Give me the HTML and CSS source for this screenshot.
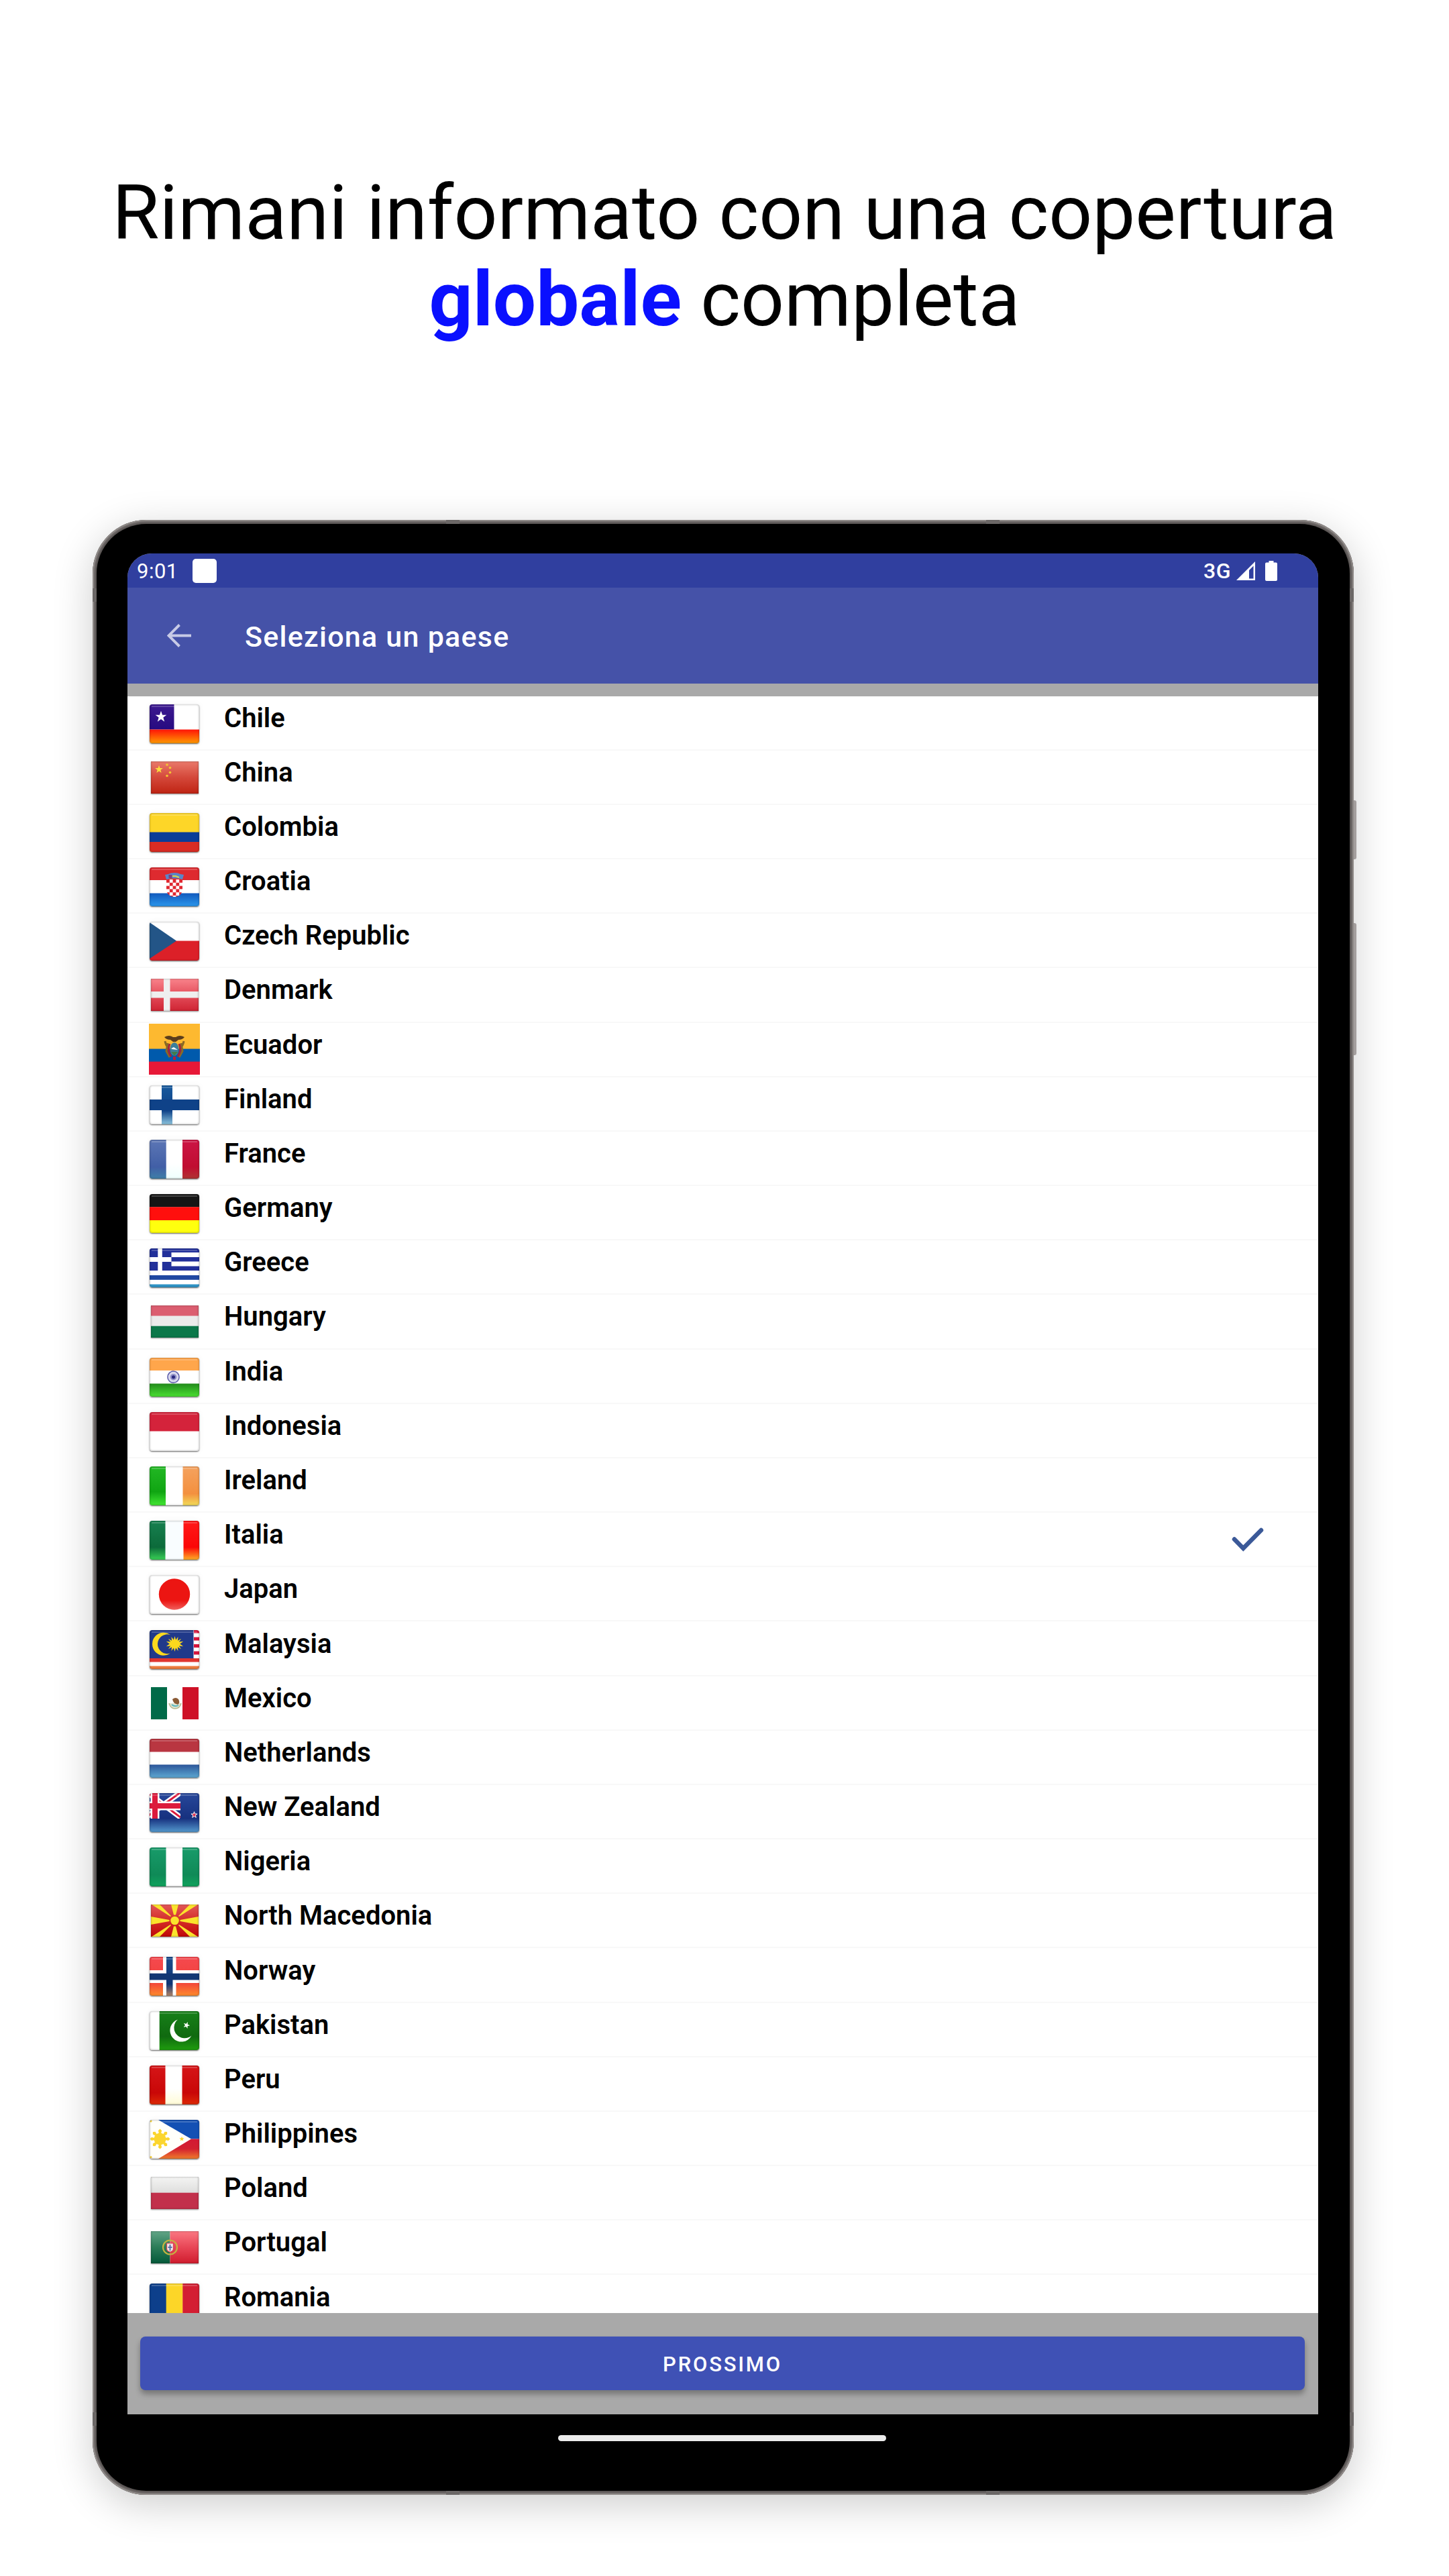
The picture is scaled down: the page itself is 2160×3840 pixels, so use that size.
FILE: index.html
```html
<!DOCTYPE html>
<html lang="it">
<head>
    <meta charset="UTF-8">
    <meta name="viewport" content="width=device-width, initial-scale=1.0">
    <title>Seleziona un paese</title>
    <link rel="stylesheet" href="styles.css">
</head>
<body>
    <!-- shared gradients and shapes for the flags -->
    <svg class="defs" width="0" height="0">
        <defs>
            <linearGradient id="g-chile" x2="0" y2="1"><stop offset="0" stop-color="#ff1408"/><stop offset="1" stop-color="#ff9a00"/></linearGradient>
            <linearGradient id="g-canton" x2="0" y2="1"><stop offset="0" stop-color="#3d1a90"/><stop offset="1" stop-color="#260a80"/></linearGradient>
            <linearGradient id="g-china" x2="0" y2="1"><stop offset="0" stop-color="#ea7a6b"/><stop offset=".5" stop-color="#d4483a"/><stop offset="1" stop-color="#bf2413"/></linearGradient>
            <linearGradient id="g-croatia" x2="0" y2="1"><stop offset="0" stop-color="#1059bd"/><stop offset="1" stop-color="#2c97ec"/></linearGradient>
            <linearGradient id="g-denmark" x2="0" y2="1"><stop offset="0" stop-color="#f9838b"/><stop offset=".5" stop-color="#e44f5c"/><stop offset="1" stop-color="#cf2433"/></linearGradient>
            <linearGradient id="g-finland" x2="0" y2="1"><stop offset="0" stop-color="#185a9d"/><stop offset=".65" stop-color="#0f4288"/><stop offset="1" stop-color="#8cc4de"/></linearGradient>
            <linearGradient id="g-france1" x2="0" y2="1"><stop offset="0" stop-color="#5c76b5"/><stop offset=".7" stop-color="#415fa6"/><stop offset="1" stop-color="#3f7fa8"/></linearGradient>
            <linearGradient id="g-france2" x2="0" y2="1"><stop offset="0" stop-color="#cc1545"/><stop offset=".7" stop-color="#c00d31"/><stop offset="1" stop-color="#b03434"/></linearGradient>
            <linearGradient id="g-mint" x2="0" y2="1"><stop offset=".6" stop-color="#fff"/><stop offset="1" stop-color="#f0fffe"/></linearGradient>
            <linearGradient id="g-india" x2="0" y2="1"><stop offset="0" stop-color="#228a1b"/><stop offset="1" stop-color="#4ae032"/></linearGradient>
            <linearGradient id="g-ireland1" x2="0" y2="1"><stop offset="0" stop-color="#22b824"/><stop offset=".65" stop-color="#10a512"/><stop offset="1" stop-color="#42e633"/></linearGradient>
            <linearGradient id="g-ireland2" x2="0" y2="1"><stop offset="0" stop-color="#f5a25e"/><stop offset=".7" stop-color="#f3903f"/><stop offset="1" stop-color="#f3dc59"/></linearGradient>
            <linearGradient id="g-italy1" x2="0" y2="1"><stop offset="0" stop-color="#178050"/><stop offset=".68" stop-color="#0c6a3a"/><stop offset="1" stop-color="#38d055"/></linearGradient>
            <linearGradient id="g-italy2" x2="0" y2="1"><stop offset="0" stop-color="#ff1818"/><stop offset=".68" stop-color="#fb0707"/><stop offset="1" stop-color="#ffae24"/></linearGradient>
            <linearGradient id="g-japan" x2="0" y2="1"><stop offset=".7" stop-color="#ec1512"/><stop offset="1" stop-color="#f0605c"/></linearGradient>
            <linearGradient id="g-dutch" x2="0" y2="1"><stop offset="0" stop-color="#2c5699"/><stop offset="1" stop-color="#5ea8d2"/></linearGradient>
            <linearGradient id="g-nz" x2="0" y2="1"><stop offset="0" stop-color="#27479a"/><stop offset=".65" stop-color="#17317f"/><stop offset="1" stop-color="#5398cd"/></linearGradient>
            <linearGradient id="g-nigeria" x2="0" y2="1"><stop offset="0" stop-color="#189b6a"/><stop offset=".7" stop-color="#0f8a57"/><stop offset="1" stop-color="#10a25c"/></linearGradient>
            <linearGradient id="g-mk" x2="0" y2="1"><stop offset="0" stop-color="#e25858"/><stop offset=".5" stop-color="#d42c28"/><stop offset="1" stop-color="#c00808"/></linearGradient>
            <linearGradient id="g-norway" x2="0" y2="1"><stop offset="0" stop-color="#f5494f"/><stop offset=".65" stop-color="#f2413b"/><stop offset="1" stop-color="#fd8a2c"/></linearGradient>
            <linearGradient id="g-norway2" x2="0" y2="1"><stop offset="0" stop-color="#1b4c8c"/><stop offset=".7" stop-color="#0f3474"/><stop offset="1" stop-color="#b08468"/></linearGradient>
            <linearGradient id="g-pak" x2="0" y2="1"><stop offset="0" stop-color="#178019"/><stop offset=".65" stop-color="#106a10"/><stop offset="1" stop-color="#1f9d0e"/></linearGradient>
            <linearGradient id="g-peru" x2="0" y2="1"><stop offset="0" stop-color="#d61518"/><stop offset=".7" stop-color="#c90707"/><stop offset="1" stop-color="#dd2a06"/></linearGradient>
            <linearGradient id="g-cream" x2="0" y2="1"><stop offset=".6" stop-color="#fff"/><stop offset="1" stop-color="#fffbd6"/></linearGradient>
            <linearGradient id="g-phil" x2="0" y2="1"><stop offset="0" stop-color="#d21934"/><stop offset=".5" stop-color="#d3202f"/><stop offset="1" stop-color="#f07c2c"/></linearGradient>
            <linearGradient id="g-poland" x2="0" y2="1"><stop offset="0" stop-color="#f4f4f3"/><stop offset="1" stop-color="#dededd"/></linearGradient>
            <linearGradient id="g-port1" x2="0" y2="1"><stop offset="0" stop-color="#62a587"/><stop offset=".5" stop-color="#2b7c58"/><stop offset="1" stop-color="#04593a"/></linearGradient>
            <linearGradient id="g-port2" x2="0" y2="1"><stop offset="0" stop-color="#fa7882"/><stop offset=".5" stop-color="#e84656"/><stop offset="1" stop-color="#d01c2e"/></linearGradient>
            <pattern id="checks" x="25" y="18" width="9.6" height="9.6" patternUnits="userSpaceOnUse">
                <rect width="9.6" height="9.6" fill="#fff"/>
                <path d="M0 0h4.8v4.8H0zM4.8 4.8h4.8v4.8H4.8z" fill="#e0262f"/>
            </pattern>
            <path id="star" d="M0-10 2.35-3.24 9.5-3.1 3.8 1.24 5.88 8.1 0 4-5.88 8.1-3.8 1.24-9.5-3.1-2.35-3.24z"/>
            <g id="ray8">
                <path id="ray" d="M-1.5-8-2.6-12.5 0-15 2.6-12.5 1.5-8z"/>
                <use href="#ray" transform="rotate(45)"/>
                <use href="#ray" transform="rotate(90)"/>
                <use href="#ray" transform="rotate(135)"/>
                <use href="#ray" transform="rotate(180)"/>
                <use href="#ray" transform="rotate(225)"/>
                <use href="#ray" transform="rotate(270)"/>
                <use href="#ray" transform="rotate(315)"/>
            </g>
        </defs>
    </svg>

    <h1 class="headline">Rimani informato con una copertura<br><strong>globale</strong> completa</h1>

    <div class="tablet">
        <i class="side-button power"></i>
        <i class="side-button volume"></i>
        <i class="band top left"></i>
        <i class="band top right"></i>
        <i class="band bottom left"></i>
        <i class="band bottom right"></i>
        <i class="band-side upper left"></i>
        <i class="band-side upper right"></i>
        <i class="band-side lower left"></i>
        <i class="band-side lower right"></i>

        <div class="bezel">
            <div class="screen">
                <div class="status-bar">
                    <span class="clock">9:01</span>
                    <span class="notification"></span>
                    <span class="network">3G</span>
                    <svg class="signal" viewBox="0 0 28 28"><path d="M28 0V28H0zM25.5 6.5 19 13V25.5h6.5z" fill="#fff" fill-rule="evenodd"/></svg>
                    <svg class="battery" viewBox="0 0 18 30"><path d="M5.5 0h7v2.5H16a2 2 0 0 1 2 2V28a2 2 0 0 1-2 2H2a2 2 0 0 1-2-2V4.5a2 2 0 0 1 2-2h3.5z" fill="#fff"/></svg>
                </div>

                <div class="app-bar">
                    <svg class="back" viewBox="0 0 36 35"><path d="M36 17.5H3M18.5 1.5 2.5 17.5 18.5 33.5" fill="none" stroke="#c7cae6" stroke-width="4"/></svg>
                    <span class="title">Seleziona un paese</span>
                </div>

                <ul class="countries">
                    <li>
                        <span class="icon"><span class="flag glossy"><svg viewBox="0 0 74 58"><rect width="74" height="58" fill="#fff"/><rect width="36.5" height="37.5" fill="url(#g-canton)"/><rect y="37.5" width="74" height="20.5" fill="url(#g-chile)"/><use href="#star" transform="translate(17 18.5) scale(.88)" fill="#fff"/></svg></span></span>
                        <span class="name">Chile</span>
                    </li>
                    <li>
                        <span class="icon"><span class="flag small"><svg viewBox="0 0 71 48"><rect width="71" height="48" fill="url(#g-china)"/><use href="#star" transform="translate(12 12) scale(.62)" fill="#fbdc3c"/><g fill="#f3c433"><circle cx="24" cy="5" r="1.8"/><circle cx="28.5" cy="9.5" r="1.8"/><circle cx="28.5" cy="16.5" r="1.8"/><circle cx="24" cy="21.5" r="1.8"/></g></svg></span></span>
                        <span class="name">China</span>
                    </li>
                    <li>
                        <span class="icon"><span class="flag glossy"><svg viewBox="0 0 74 58"><rect width="74" height="58" fill="#fdd628"/><rect y="28.5" width="74" height="15" fill="#0a3d97"/><rect y="43" width="74" height="15" fill="#da2c23"/></svg></span></span>
                        <span class="name">Colombia</span>
                    </li>
                    <li>
                        <span class="icon"><span class="flag glossy"><svg viewBox="0 0 74 58"><rect width="74" height="58" fill="#fff"/><rect width="74" height="19" fill="#de2a2f"/><rect y="38.5" width="74" height="19.5" fill="url(#g-croatia)"/><path d="M25 18h24v14c0 7-5 12-12 12s-12-5-12-12z" fill="url(#checks)"/><path d="M23 11l5-1 4-1.500 5-.5 5 .5 4 1.500 5 1-2 7-6-1.500h-12L25 18z" fill="#5b86c8"/><path d="M28.5 11h5v5h-5z" fill="#8a3b78"/><path d="M34 13h5l5 2" stroke="#dcd64a" stroke-width="2" fill="none"/></svg></span></span>
                        <span class="name">Croatia</span>
                    </li>
                    <li>
                        <span class="icon"><span class="flag glossy"><svg viewBox="0 0 74 58"><rect width="74" height="28.5" fill="#fff"/><rect y="28.5" width="74" height="29.5" fill="#dc2028"/><path d="M0 1 40 28.5 0 55z" fill="#235587"/></svg></span></span>
                        <span class="name">Czech Republic</span>
                    </li>
                    <li>
                        <span class="icon"><span class="flag small"><svg viewBox="0 0 71 48"><rect width="71" height="48" fill="url(#g-denmark)"/><path d="M19 0h9.500v19H71v9.500H28.5V48H19V28.5H0V19h19z" fill="#efefef"/></svg></span></span>
                        <span class="name">Denmark</span>
                    </li>
                    <li>
                        <span class="icon"><span class="flag square"><svg viewBox="0 0 76 76"><rect width="76" height="38" fill="#fdb930"/><rect y="37.5" width="76" height="19.5" fill="#005aac"/><rect y="56.5" width="76" height="19.5" fill="#e71837"/><path d="M23 20q7-4 13 0h4q6-4 13 0-3 4-9 4l-4 3h-4l-4-3q-6 0-9-4z" fill="#5b3d1c"/><path d="M24 26q1 6 4 9M52 26q-1 6-4 9M28 29l-2 12 5 9M48 29l2 12-5 9" stroke="#8a6a25" stroke-width="3" fill="none"/><path d="M31 30q-4 10 2 19M45 30q4 10-2 19" stroke="#a3243c" stroke-width="3" fill="none"/><ellipse cx="38" cy="38" rx="6.500" ry="10" fill="#3c7f9a"/><path d="M33 37l4-2 6 4-8-1z" fill="#fff"/><path d="M33 42h10l-5 6z" fill="#3f7d4a"/><path d="M36 49h4v5h-4z" fill="#b0213c"/></svg></span></span>
                        <span class="name">Ecuador</span>
                    </li>
                    <li>
                        <span class="icon"><span class="flag glossy"><svg viewBox="0 0 74 58"><rect width="74" height="58" fill="#fff"/><rect x="18" width="16" height="58" fill="url(#g-finland)"/><rect y="21" width="74" height="16" fill="#0f4288"/></svg></span></span>
                        <span class="name">Finland</span>
                    </li>
                    <li>
                        <span class="icon"><span class="flag glossy"><svg viewBox="0 0 74 58"><rect width="74" height="58" fill="url(#g-mint)"/><rect width="24.7" height="58" fill="url(#g-france1)"/><rect x="49" width="25" height="58" fill="url(#g-france2)"/></svg></span></span>
                        <span class="name">France</span>
                    </li>
                    <li>
                        <span class="icon"><span class="flag glossy"><svg viewBox="0 0 74 58"><rect width="74" height="19.5" fill="#151515"/><rect y="19.3" width="74" height="20" fill="#ff0f0d"/><rect y="39" width="74" height="19" fill="#ffff0e"/></svg></span></span>
                        <span class="name">Germany</span>
                    </li>
                    <li>
                        <span class="icon"><span class="flag glossy"><svg viewBox="0 0 74 58"><rect width="74" height="58" fill="#fff"/><g fill="#22309a"><rect width="74" height="6"/><rect y="13" width="74" height="6.5"/><rect y="26.5" width="74" height="6.5"/><rect width="32.5" height="33"/></g><rect y="40" width="74" height="6.8" fill="#2048a2"/><rect y="53.5" width="74" height="4.5" fill="#2f94c6"/><path d="M12.3 0h6.5v13h13.7v7H18.8v13h-6.5V20H0v-7h12.3z" fill="#fff"/></svg></span></span>
                        <span class="name">Greece</span>
                    </li>
                    <li>
                        <span class="icon"><span class="flag small"><svg viewBox="0 0 71 48"><rect width="71" height="16" fill="#db5e70"/><rect y="15.5" width="71" height="15.5" fill="#ebebeb"/><rect y="30.7" width="71" height="17.5" fill="#0b7749"/></svg></span></span>
                        <span class="name">Hungary</span>
                    </li>
                    <li>
                        <span class="icon"><span class="flag glossy"><svg viewBox="0 0 74 58"><rect width="74" height="58" fill="#fff"/><rect width="74" height="19" fill="#ffa64b"/><rect y="38.5" width="74" height="19.5" fill="url(#g-india)"/><circle cx="35.5" cy="28.7" r="8.6" fill="#d9d9ee" stroke="#5a5aa8" stroke-width="1.5"/><circle cx="35.5" cy="28.7" r="4.8" fill="#8f8fc6"/><circle cx="35.5" cy="28.7" r="2.5" fill="#28287e"/></svg></span></span>
                        <span class="name">India</span>
                    </li>
                    <li>
                        <span class="icon"><span class="flag glossy"><svg viewBox="0 0 74 58"><rect width="74" height="58" fill="#fff"/><rect width="74" height="28.5" fill="#d4233b"/></svg></span></span>
                        <span class="name">Indonesia</span>
                    </li>
                    <li>
                        <span class="icon"><span class="flag glossy"><svg viewBox="0 0 74 58"><rect width="74" height="58" fill="#fff"/><rect width="24" height="58" fill="url(#g-ireland1)"/><rect x="49.5" width="24.5" height="58" fill="url(#g-ireland2)"/></svg></span></span>
                        <span class="name">Ireland</span>
                    </li>
                    <li>
                        <span class="icon"><span class="flag glossy"><svg viewBox="0 0 74 58"><rect width="74" height="58" fill="#f9fdff"/><rect width="23.5" height="58" fill="url(#g-italy1)"/><rect x="50.5" width="23.5" height="58" fill="url(#g-italy2)"/></svg></span></span>
                        <span class="name">Italia</span>
                        <svg class="check" viewBox="0 0 48 36"><path d="M4 17.5 17.3 31 44 4" fill="none" stroke="#3b5998" stroke-width="6.5" stroke-linecap="round"/></svg>
                    </li>
                    <li>
                        <span class="icon"><span class="flag glossy"><svg viewBox="0 0 74 58"><rect width="74" height="58" fill="#fff"/><circle cx="37" cy="28.5" r="23.2" fill="url(#g-japan)"/></svg></span></span>
                        <span class="name">Japan</span>
                    </li>
                    <li>
                        <span class="icon"><span class="flag glossy"><svg viewBox="0 0 74 58"><rect width="74" height="58" fill="#fff"/><path d="M66 2h8M66 13h8M66 23.5h8M66 34h8" stroke="#d8143c" stroke-width="5"/><rect width="65.5" height="42" fill="#20398a"/><rect y="42" width="74" height="5.5" fill="#e0352f"/><rect y="53.5" width="74" height="4.5" fill="#ee7d3e"/><path d="M31 7A17 17 0 1 0 31 34.5 14.5 14.5 0 1 1 31 7z" fill="#fbd91e"/><path d="M37.5 9l1.6 5.5 3.4-4.5-.6 5.7 5.2-3-3.3 4.7 6.4-.6-5 3.7 5 3.7-6.4-.6 3.3 4.7-5.2-3 .6 5.7-3.4-4.5-1.6 5.5-1.6-5.5-3.4 4.5.6-5.7-5.2 3 3.3-4.7-6.4.6 5-3.7-5-3.7 6.4.6-3.3-4.7 5.2 3-.6-5.7 3.4 4.5z" fill="#fbd91e"/></svg></span></span>
                        <span class="name">Malaysia</span>
                    </li>
                    <li>
                        <span class="icon"><span class="flag small plain"><svg viewBox="0 0 71 48"><rect width="71" height="48" fill="#fff"/><rect width="24" height="48" fill="#006a48"/><rect x="47" width="24" height="48" fill="#ce1127"/><path d="M27 24q2 8 9 8t9-8" fill="#dfe3cf" stroke="#b9b88e" stroke-width="1.5"/><path d="M32 18q5-4 9 0 3 5-1 8l-5-2-2-3z" fill="#8a5a35"/><path d="M31 26q5 4 10 1" stroke="#57b5bd" stroke-width="2" fill="none"/></svg></span></span>
                        <span class="name">Mexico</span>
                    </li>
                    <li>
                        <span class="icon"><span class="flag glossy"><svg viewBox="0 0 74 58"><rect width="74" height="58" fill="#fffffd"/><rect width="74" height="19.5" fill="#b93641"/><rect y="38.5" width="74" height="19.5" fill="url(#g-dutch)"/></svg></span></span>
                        <span class="name">Netherlands</span>
                    </li>
                    <li>
                        <span class="icon"><span class="flag glossy"><svg viewBox="0 0 74 58"><rect width="74" height="58" fill="url(#g-nz)"/><svg width="46" height="38" viewBox="0 0 46 38"><path d="M-30-21 46 36M-30 54 46-1" stroke="#fff" stroke-width="8"/><path d="M-30-21 46 36M-30 54 46-1" stroke="#dc1a3c" stroke-width="3"/><path d="M8 0v38M0 19h46" stroke="#fff" stroke-width="13"/><path d="M8 0v38M0 19h46" stroke="#dc1a3c" stroke-width="8"/></svg><use href="#star" transform="translate(66.5 32.5) scale(.48)" fill="#dc2b4a" stroke="#fff" stroke-width="2"/></svg></span></span>
                        <span class="name">New Zealand</span>
                    </li>
                    <li>
                        <span class="icon"><span class="flag glossy"><svg viewBox="0 0 74 58"><rect width="74" height="58" fill="#fff"/><rect width="24.5" height="58" fill="url(#g-nigeria)"/><rect x="49" width="25" height="58" fill="url(#g-nigeria)"/></svg></span></span>
                        <span class="name">Nigeria</span>
                    </li>
                    <li>
                        <span class="icon"><span class="flag small"><svg viewBox="0 0 71 48"><rect width="71" height="48" fill="url(#g-mk)"/><g fill="#fae32c"><path d="M30 0h11l-4 15.5h-3zM30 48h11l-4-15.5h-3zM0 18v12l27.5-5v-2zM71 18v12l-27.5-5v-2zM1 0h12l17 17-1 1zM70 0H58L41 17l1 1zM1 48h12l17-17-1-1zM70 48H58L41 31l1-1z"/><circle cx="35.5" cy="24" r="6.3"/></g></svg></span></span>
                        <span class="name">North Macedonia</span>
                    </li>
                    <li>
                        <span class="icon"><span class="flag glossy"><svg viewBox="0 0 74 58"><rect width="74" height="58" fill="url(#g-norway)"/><path d="M20 0h19.5v20H74v19H39.5v19H20V39H0V20h20z" fill="#fff"/><rect x="25" width="9.5" height="58" fill="url(#g-norway2)"/><rect y="24.7" width="74" height="9.8" fill="#123774"/></svg></span></span>
                        <span class="name">Norway</span>
                    </li>
                    <li>
                        <span class="icon"><span class="flag glossy"><svg viewBox="0 0 74 58"><rect width="74" height="58" fill="#fff"/><rect x="14.7" width="59.3" height="58" fill="url(#g-pak)"/><path d="M42 12.5A17 17 0 1 0 62.5 36.5 15.5 15.5 0 0 1 42 12.5z" fill="#fff"/><use href="#star" transform="translate(55 21) rotate(20) scale(.52)" fill="#fff"/></svg></span></span>
                        <span class="name">Pakistan</span>
                    </li>
                    <li>
                        <span class="icon"><span class="flag glossy"><svg viewBox="0 0 74 58"><rect width="74" height="58" fill="url(#g-cream)"/><rect width="23.5" height="58" fill="url(#g-peru)"/><rect x="48.5" width="25.5" height="58" fill="url(#g-peru)"/></svg></span></span>
                        <span class="name">Peru</span>
                    </li>
                    <li>
                        <span class="icon"><span class="flag glossy"><svg viewBox="0 0 74 58"><rect width="74" height="28.5" fill="#1350b4"/><rect y="28.5" width="74" height="29.5" fill="url(#g-phil)"/><path d="M0 0h13L62 28.5 13 58H0z" fill="#fffffb"/><g fill="#fbd52e"><circle cx="15.5" cy="28.5" r="9"/><use href="#ray8" transform="translate(15.5 28.5)"/><use href="#star" transform="translate(48 28.5) scale(.38)"/><circle cx="2" cy="2" r="1.5"/><circle cx="2" cy="55.5" r="1.5"/></g></svg></span></span>
                        <span class="name">Philippines</span>
                    </li>
                    <li>
                        <span class="icon"><span class="flag small"><svg viewBox="0 0 71 48"><rect width="71" height="24" fill="url(#g-poland)"/><rect y="23.7" width="71" height="24.3" fill="#c2304b"/></svg></span></span>
                        <span class="name">Poland</span>
                    </li>
                    <li>
                        <span class="icon"><span class="flag small"><svg viewBox="0 0 71 48"><rect width="28.5" height="48" fill="url(#g-port1)"/><rect x="28.5" width="42.5" height="48" fill="url(#g-port2)"/><circle cx="28.5" cy="24" r="10.5" fill="none" stroke="#c4b440" stroke-width="2.2"/><path d="M23.5 18h10v8q0 4-5 5-5-1-5-5z" fill="#f3e4e8" stroke="#d8404e" stroke-width="1.2"/><path d="M28.5 20v9M25.5 24h6" stroke="#5873a8" stroke-width="2"/></svg></span></span>
                        <span class="name">Portugal</span>
                    </li>
                    <li>
                        <span class="icon"><span class="flag glossy"><svg viewBox="0 0 74 58"><rect width="25" height="58" fill="#0d3f8b"/><rect x="24.7" width="25" height="58" fill="#fcd628"/><rect x="49.3" width="24.7" height="58" fill="#d31e33"/></svg></span></span>
                        <span class="name">Romania</span>
                    </li>
                </ul>

                <div class="footer">
                    <button class="next">PROSSIMO</button>
                </div>
            </div>
            <div class="home-indicator"></div>
        </div>
    </div>
</body>
</html>
```
FILE: styles.css
```css
* {
    box-sizing: border-box;
}
body {
    font-family: Roboto, sans-serif;
    background: #fff;
    margin: 0;
    width: 2160px;
    height: 3840px;
    padding-top: 253px;
    overflow: hidden;
}
.defs {
    position: absolute;
}
.headline {
    margin: 0;
    height: 258px;
    font-size: 114px;
    line-height: 129px;
    font-weight: 400;
    text-align: center;
    white-space: nowrap;
    color: #000;
}
.headline strong {
    font-weight: 700;
    color: #0a10ff;
}

/* tablet frame */
.tablet {
    position: relative;
    width: 1880px;
    height: 2944px;
    margin: 264px 0 0 138px;
    padding: 6px;
    border-radius: 80px;
    background: #5b5655;
    box-shadow: inset 0 0 0 2px #8f8a88, inset 0 0 0 4px #6c6766, 0 14px 60px rgba(0, 0, 0, 0.2);
}
.bezel {
    height: 100%;
    padding: 44px 46px 0;
    border-radius: 74px;
    background: #000;
    display: flex;
    flex-direction: column;
    align-items: center;
}
.side-button {
    position: absolute;
    left: 100%;
    width: 4px;
    background: #a39e9d;
    border-radius: 0 3px 3px 0;
}
.power {
    top: 418px;
    height: 88px;
}
.volume {
    top: 601px;
    height: 197px;
}
.band,
.band-side {
    position: absolute;
    background: #6b6766;
}
.band {
    width: 20px;
    height: 6px;
}
.band.left {
    left: 527px;
}
.band.right {
    left: 1332px;
}
.band.top {
    top: 0;
}
.band.bottom {
    bottom: 0;
}
.band-side {
    width: 6px;
    height: 20px;
}
.band-side.left {
    left: 0;
}
.band-side.right {
    right: 0;
}
.band-side.upper {
    top: 102px;
}
.band-side.lower {
    top: 2821px;
}

/* screen */
.screen {
    width: 1775px;
    height: 2774px;
    flex: none;
    align-self: flex-start;
    display: flex;
    flex-direction: column;
    overflow: hidden;
    border-radius: 36px 36px 0 0;
    background: #a9a9a9;
}
.status-bar {
    height: 51px;
    flex: none;
    display: flex;
    align-items: center;
    padding: 0 61px 0 14px;
    background: #303f9f;
    color: #fff;
}
.clock {
    font-size: 31px;
    letter-spacing: 0.5px;
    width: 83px;
    padding-top: 1px;
}
.notification {
    width: 36px;
    height: 36px;
    border-radius: 5px;
    background: #fff;
}
.network {
    margin-left: auto;
    font-size: 32px;
    letter-spacing: 0.5px;
    font-weight: 500;
}
.signal {
    width: 28px;
    height: 28px;
    margin: 0 15px 0 8px;
}
.battery {
    width: 18px;
    height: 30px;
}
.app-bar {
    height: 143px;
    flex: none;
    display: flex;
    align-items: center;
    padding-left: 59px;
    background: #4552a8;
    color: #fff;
}
.back {
    width: 36px;
    height: 35px;
    margin-right: 80px;
}
.title {
    font-size: 43px;
    font-weight: 500;
    letter-spacing: 1.25px;
    padding-top: 3px;
}

/* country list */
.countries {
    list-style: none;
    margin: 18.5px 0 0;
    padding: 0;
    height: 2410px;
    flex: none;
    overflow: hidden;
    background: #fff;
}
.countries li {
    height: 81.18px;
    display: flex;
    align-items: center;
    padding: 0 81px 0 32px;
    border-bottom: 2px solid #f8f8f8;
}
.icon {
    width: 76px;
    height: 76px;
    display: flex;
    align-items: center;
    justify-content: center;
}
.flag {
    position: relative;
    display: block;
}
.flag svg {
    display: block;
    width: 100%;
    height: 100%;
}
.flag > svg {
    border-radius: inherit;
}
.flag svg svg {
    width: 46px;
    height: 38px;
}
.glossy {
    width: 74px;
    height: 58px;
    margin-top: 3px;
    border-radius: 4px;
    box-shadow: 0 1px 2px rgba(0, 0, 0, 0.6), 0 0 10px rgba(0, 0, 0, 0.05);
}
.small {
    width: 71px;
    height: 48px;
    margin-top: 1px;
    box-shadow: 0 1px 2px rgba(0, 0, 0, 0.45);
}
.plain {
    box-shadow: none;
}
.square {
    width: 76px;
    height: 76px;
}
/* shine along the rim of the flag */
.glossy::after,
.small::after {
    content: "";
    position: absolute;
    inset: 0;
    border-radius: inherit;
    box-shadow: inset 0 0 3px rgba(0, 0, 0, 0.35);
}
.glossy::before {
    content: "";
    position: absolute;
    left: 3px;
    right: 3px;
    top: 2px;
    height: 2px;
    background: rgba(255, 255, 255, 0.2);
}
.plain::after {
    box-shadow: none;
}
.name {
    margin-left: 36px;
    padding-bottom: 14px;
    font-size: 40px;
    font-weight: 600;
    color: #000;
}
.check {
    width: 48px;
    height: 36px;
    margin-top: 1px;
    margin-left: auto;
}

/* bottom button */
.footer {
    flex: 1;
    padding: 35px 20px 0 19px;
}
.next {
    display: block;
    width: 100%;
    height: 80px;
    padding: 4px 0 0;
    border: none;
    border-radius: 8px;
    background: #3f51b5;
    box-shadow: 0 6px 8px rgba(0, 0, 0, 0.3);
    color: #fff;
    font-family: inherit;
    font-size: 31px;
    font-weight: 500;
    letter-spacing: 2.8px;
}
.home-indicator {
    width: 489px;
    height: 9px;
    margin: 31px 3px 0 0;
    border-radius: 5px;
    background: #ebebeb;
}
```
